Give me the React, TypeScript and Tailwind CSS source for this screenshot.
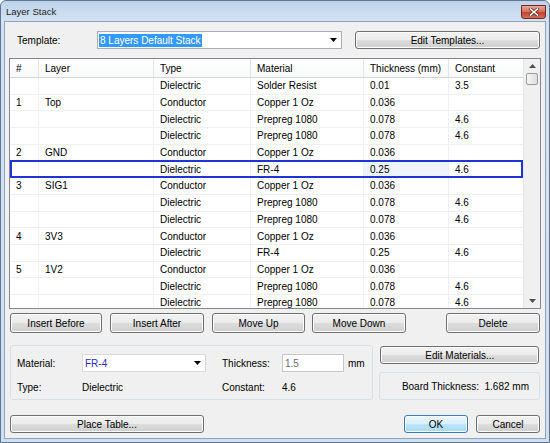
import React from 'react';

type Row = { n: string; layer: string; type: string; material: string; thick: string; k: string };

const rows: Row[] = [
  { n: '', layer: '', type: 'Dielectric', material: 'Solder Resist', thick: '0.01', k: '3.5' },
  { n: '1', layer: 'Top', type: 'Conductor', material: 'Copper 1 Oz', thick: '0.036', k: '' },
  { n: '', layer: '', type: 'Dielectric', material: 'Prepreg 1080', thick: '0.078', k: '4.6' },
  { n: '', layer: '', type: 'Dielectric', material: 'Prepreg 1080', thick: '0.078', k: '4.6' },
  { n: '2', layer: 'GND', type: 'Conductor', material: 'Copper 1 Oz', thick: '0.036', k: '' },
  { n: '', layer: '', type: 'Dielectric', material: 'FR-4', thick: '0.25', k: '4.6' },
  { n: '3', layer: 'SIG1', type: 'Conductor', material: 'Copper 1 Oz', thick: '0.036', k: '' },
  { n: '', layer: '', type: 'Dielectric', material: 'Prepreg 1080', thick: '0.078', k: '4.6' },
  { n: '', layer: '', type: 'Dielectric', material: 'Prepreg 1080', thick: '0.078', k: '4.6' },
  { n: '4', layer: '3V3', type: 'Conductor', material: 'Copper 1 Oz', thick: '0.036', k: '' },
  { n: '', layer: '', type: 'Dielectric', material: 'FR-4', thick: '0.25', k: '4.6' },
  { n: '5', layer: '1V2', type: 'Conductor', material: 'Copper 1 Oz', thick: '0.036', k: '' },
  { n: '', layer: '', type: 'Dielectric', material: 'Prepreg 1080', thick: '0.078', k: '4.6' },
  { n: '', layer: '', type: 'Dielectric', material: 'Prepreg 1080', thick: '0.078', k: '4.6' },
];

const SELECTED = 5;
const cols = 'grid grid-cols-[29px_115px_97px_113px_85px_74px]';

const Button = ({ children, className = '', primary = false }: any) => (
  <button
    className={`flex items-center justify-center rounded-[3px] border text-black ${
      primary
        ? 'border-[#3c7fb1] bg-[linear-gradient(to_bottom,#eaf6fd_0%,#d9f0fc_50%,#bee6fd_50%,#a7d9f5_100%)]'
        : 'border-[#707070] bg-[linear-gradient(to_bottom,#f2f2f2_0%,#ebebeb_50%,#dddddd_50%,#cfcfcf_100%)]'
    } shadow-[inset_0_0_0_1px_#fcfcfc] ${className}`}
  >
    {children}
  </button>
);

const Arrow = ({ up = false, color = '#000' }: { up?: boolean; color?: string }) => (
  <svg width="7" height="4" viewBox="0 0 7 4">
    <path d={up ? 'M0 4 L3.5 0 L7 4 Z' : 'M0 0 L7 0 L3.5 4 Z'} fill={color} />
  </svg>
);

function Cell({ children, last = false, className = '' }: any) {
  return (
    <div className={`flex items-center truncate px-[6px] ${last ? '' : 'border-r border-r-[#f0f0f0]'} ${className}`}>
      {children}
    </div>
  );
}

function StackTable() {
  return (
    <div className="mx-[4px] mt-[9px] flex h-[251px] border border-[#828790] bg-white">
      <div className="h-full w-[513px] overflow-hidden">
        {/* column headers */}
        <div className={`${cols} h-[19px] border-b border-b-[#d5d5d5] bg-[linear-gradient(to_bottom,#ffffff,#f7f8f9)]`}>
          {['#', 'Layer', 'Type', 'Material', 'Thickness (mm)', 'Constant'].map((h, i) => (
            <div key={h} className={`flex items-center px-[6px] ${i < 5 ? 'border-r border-r-[#e5e5e5]' : ''}`}>
              {h}
            </div>
          ))}
        </div>
        {rows.map((r, i) => {
          const sel = i === SELECTED;
          return (
            <div
              key={i}
              className={`${cols} relative h-[16.7px] border-b border-b-[#f0f0f0]`}
            >
              <Cell>{r.n}</Cell>
              <Cell>{r.layer}</Cell>
              <Cell>{r.type}</Cell>
              <Cell>{r.material}</Cell>
              <Cell className={sel ? 'bg-[#eef4fc]' : ''}>{r.thick}</Cell>
              <Cell last>{r.k}</Cell>
              {sel && <div className="pointer-events-none absolute inset-x-0 top-[-1px] bottom-[-1px] border-2 border-[#1f34d4]" />}
            </div>
          );
        })}
      </div>
      {/* vertical scrollbar */}
      <div className="flex w-[17px] flex-col border-l border-l-[#e6e6e6] bg-[#f0f0f0]">
        <div className="flex h-[14px] items-center justify-center">
          <Arrow up color="#505050" />
        </div>
        <div className="mx-[2px] h-[12px] rounded-[2px] border border-[#9b9b9b] bg-[linear-gradient(to_right,#f5f5f5,#dedede)]" />
        <div className="flex-1" />
        <div className="flex h-[14px] items-center justify-center">
          <Arrow color="#505050" />
        </div>
      </div>
    </div>
  );
}

export default function App() {
  return (
    <div className="flex h-[443px] w-[550px] flex-col overflow-hidden rounded-t-[6px] border border-[#5f7590] bg-[linear-gradient(to_bottom,#bed3eb_0px,#d3e2f3_20px,#cfdff1_100%)] font-['Liberation_Sans',Arial,sans-serif] text-[10px] text-black">
      {/* title bar */}
      <div className="flex h-[20px] shrink-0 items-center justify-between pl-[5px] pr-[3px]">
        <span className="pt-[2px] text-[9.5px] text-[#1e1e1e]">Layer Stack</span>
        <div className="mt-[2px] flex h-[14px] w-[25px] items-center justify-center rounded-b-[3px] border border-[#6e2b22] bg-[linear-gradient(to_bottom,#e8a897_0%,#d7735f_45%,#c4432c_55%,#d2705b_100%)]">
          <svg width="10" height="8" viewBox="0 0 10 8">
            <path d="M1.5 1 L8.5 7 M8.5 1 L1.5 7" stroke="#5a2a20" strokeWidth="3" strokeLinecap="square" />
            <path d="M1.5 1 L8.5 7 M8.5 1 L1.5 7" stroke="#ffffff" strokeWidth="1.6" strokeLinecap="square" />
          </svg>
        </div>
      </div>

      {/* client area */}
      <div className="mx-[3px] mb-[3px] flex flex-1 flex-col border border-[#8ea3bd] bg-[#f0f0f0]">
        {/* template */}
        <div className="mt-[9px] flex h-[18px] items-center">
          <span className="w-[92px] pl-[12px]">Template:</span>
          <div className="flex h-[18px] w-[245px] items-center border border-[#abadb3] bg-white pl-[1px] pr-[4px]">
            <span className="bg-[#3399ff] px-[1px] leading-[13px] text-white">8 Layers Default Stack</span>
            <div className="flex-1" />
            <Arrow />
          </div>
          <Button className="ml-[13px] h-[18px] w-[185px]">Edit Templates...</Button>
        </div>

        <StackTable />

        {/* row actions */}
        <div className="mx-[5px] mt-[4px] flex h-[20px] items-stretch">
          <Button className="w-[92px]">Insert Before</Button>
          <Button className="ml-[8px] w-[94px]">Insert After</Button>
          <Button className="ml-[8px] w-[93px]">Move Up</Button>
          <Button className="ml-[7px] w-[94px]">Move Down</Button>
          <div className="flex-1" />
          <Button className="w-[94px]">Delete</Button>
        </div>

        {/* layer properties */}
        <div className="mx-[5px] mt-[12px] flex h-[55px]">
          <div className="flex w-[364px] flex-col rounded-[3px] border border-[#d5dfe5] pt-[8px]">
            <div className="flex h-[18px] items-center">
              <span className="w-[71px] pl-[6px]">Material:</span>
              <div className="flex h-[18px] w-[124px] items-center border border-[#d9d9d9] bg-white pl-[2px] pr-[4px]">
                <span className="text-[#2b2bd0]">FR-4</span>
                <div className="flex-1" />
                <Arrow />
              </div>
              <span className="ml-[16px] w-[60px]">Thickness:</span>
              <div className="flex h-[18px] w-[62px] items-center border border-[#c8c8c8] bg-white pl-[2px] text-[#6d6d6d]">1.5</div>
              <span className="ml-[4px]">mm</span>
            </div>
            <div className="mt-[6px] flex h-[18px] items-center">
              <span className="w-[71px] pl-[6px]">Type:</span>
              <span className="w-[124px]">Dielectric</span>
              <span className="ml-[16px] w-[60px]">Constant:</span>
              <span>4.6</span>
            </div>
          </div>
          <div className="ml-[6px] flex w-[161px] flex-col">
            <Button className="ml-[1px] mt-[1px] h-[18px] w-[159px]">Edit Materials...</Button>
            <div className="mt-[8px] flex flex-1 items-center justify-end rounded-[3px] border border-[#d5dfe5] pr-[10px]">
              Board Thickness:&nbsp;&nbsp;1.682 mm
            </div>
          </div>
        </div>

        {/* dialog buttons */}
        <div className="mx-[5px] mt-[15px] flex h-[18px]">
          <Button className="w-[194px]">Place Table...</Button>
          <div className="flex-1" />
          <Button primary className="w-[64px]">OK</Button>
          <Button className="ml-[8px] w-[64px]">Cancel</Button>
        </div>
      </div>
    </div>
  );
}
